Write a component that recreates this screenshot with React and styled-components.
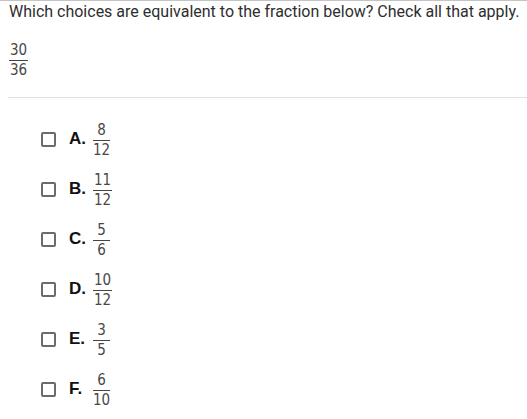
import styled, { createGlobalStyle } from "styled-components";

const GlobalStyle = createGlobalStyle`
	body {
		margin: 0;
		background: #fff;
		font-family: Roboto, "Liberation Sans", sans-serif;
	}
`;

const choices = [
	{ letter: "A", num: "8", den: "12" },
	{ letter: "B", num: "11", den: "12" },
	{ letter: "C", num: "5", den: "6" },
	{ letter: "D", num: "10", den: "12" },
	{ letter: "E", num: "3", den: "5" },
	{ letter: "F", num: "6", den: "10" },
];

function Fraction({ num, den, shift = 0 }) {
	return (
		<Frac $shift={shift}>
			<Num>{num}</Num>
			<Den>{den}</Den>
		</Frac>
	);
}

function App() {
	return (
		<Page>
			<GlobalStyle />
			<Header>
				<Question>Which choices are equivalent to the fraction below? Check all that apply.</Question>
				<Given>
					<Fraction num="30" den="36" />
				</Given>
			</Header>
			<Divider />
			<List>
				{choices.map((c) => (
					<Row key={c.letter}>
						<Box />
						<Letter>{c.letter}.</Letter>
						<Fraction num={c.num} den={c.den} shift={3} />
					</Row>
				))}
			</List>
		</Page>
	);
}

const Page = styled.div`
	width: 527px;
	height: 419px;
	border-top: 1px solid #c4c4c4;
	box-sizing: border-box;
	overflow: hidden;
`;

const Header = styled.div`
	padding: 1px 0 0 9px;
	height: 96px;
	box-sizing: border-box;
`;

const Question = styled.p`
	margin: 0;
	font-size: 16px;
	line-height: 20px;
	color: #2e2e2e;
	white-space: nowrap;
`;

const Given = styled.div`
	margin-top: 18px;
`;

const Frac = styled.span`
	display: inline-flex;
	flex-direction: column;
	align-items: center;
	margin-top: ${(p) => p.$shift}px;
	font-family: "Liberation Sans Narrow", "DejaVu Sans Condensed", "Liberation Sans", sans-serif;
	font-size: 15px;
	line-height: 13px;
	color: #484848;
`;

const Num = styled.span`
	padding: 0 1px 3px;
	border-bottom: 1px solid #444;
	align-self: stretch;
	text-align: center;
	min-width: 15px;
`;

const Den = styled.span`
	padding-top: 3px;
`;

const Divider = styled.div`
	margin-left: 8px;
	height: 1px;
	background: #e2e2e2;
`;

const List = styled.div`
	display: flex;
	flex-direction: column;
	padding: 16px 0 0 41px;
`;

const Row = styled.div`
	display: flex;
	align-items: center;
	height: 50px;
`;

const Box = styled.span`
	width: 15px;
	height: 15px;
	box-sizing: border-box;
	border: 2px solid #6b6b6b;
	border-radius: 2px;
	margin-right: 13px;
`;

const Letter = styled.span`
	width: 24px;
	font-family: "Liberation Sans", Arial, sans-serif;
	font-weight: 700;
	font-size: 17px;
	color: #111;
`;

export default App;
